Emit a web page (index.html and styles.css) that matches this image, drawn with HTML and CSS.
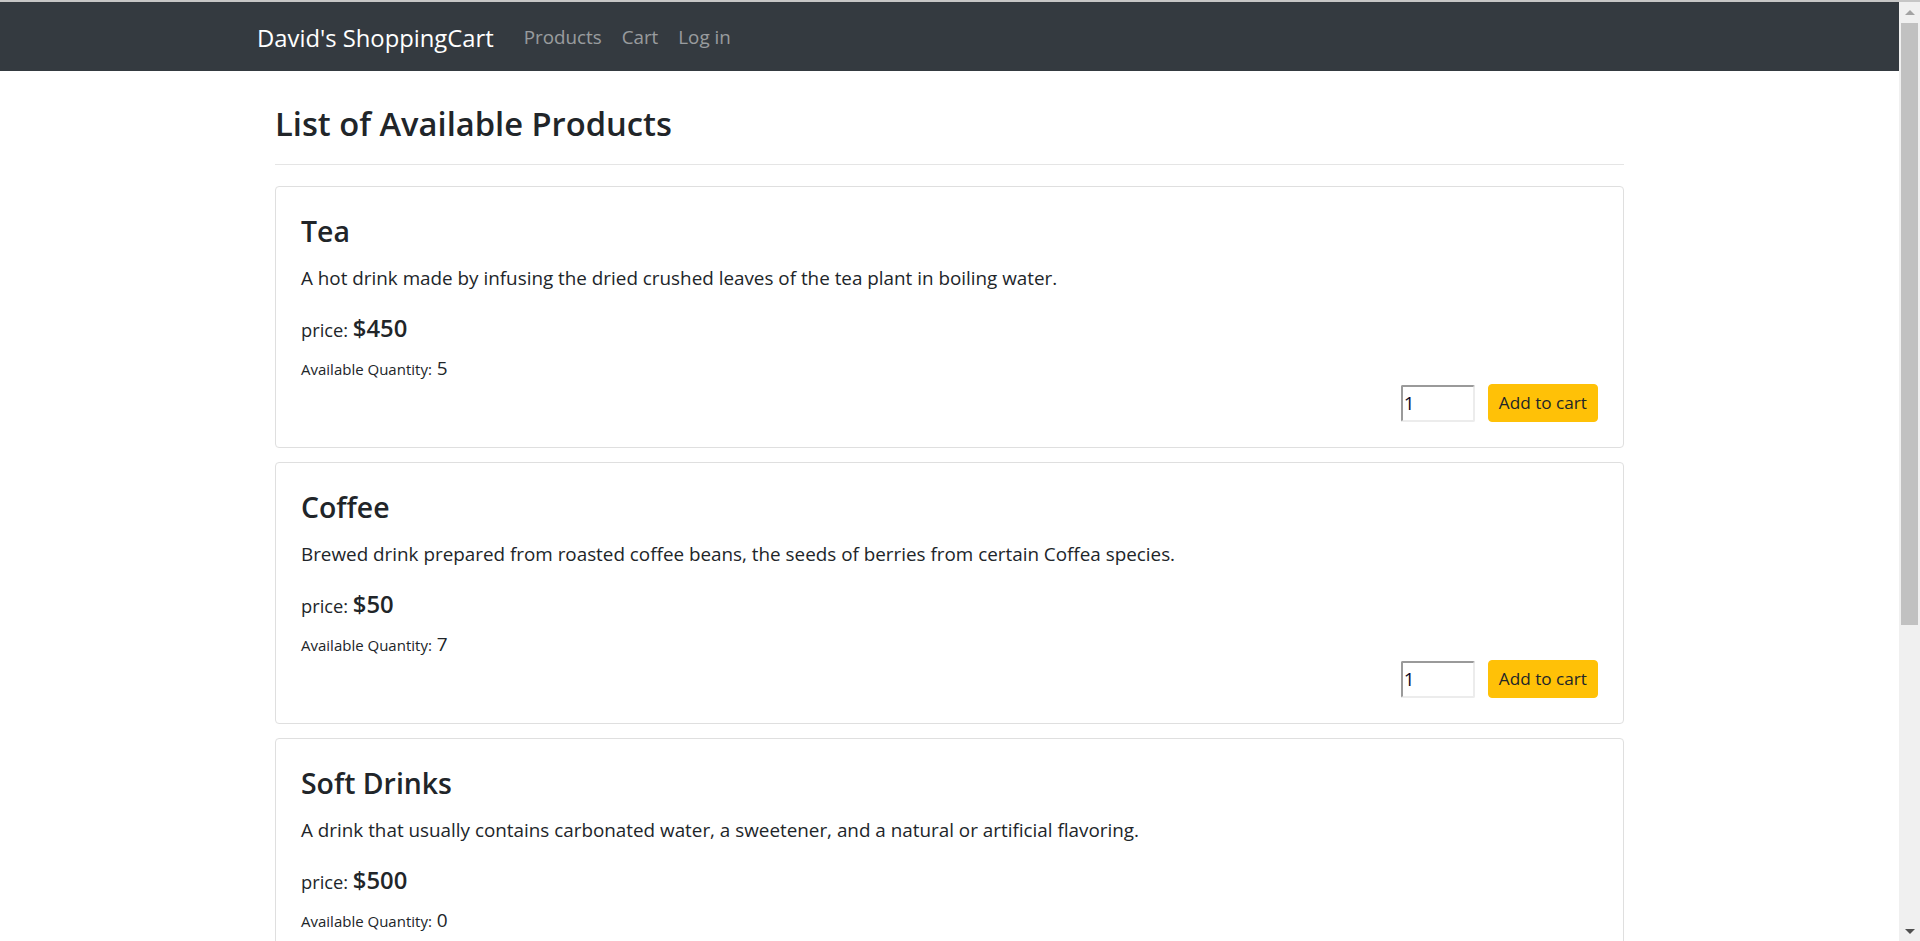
FILE: index.html
```html
<!DOCTYPE html>
<html lang="en">
<head>
<meta charset="utf-8">
<title>David's ShoppingCart</title>
<link rel="stylesheet" href="styles.css">
</head>
<body>
<div class="window">
  <div class="viewport">
    <nav class="navbar">
      <div class="nav-inner">
        <a class="brand" href="#">David's ShoppingCart</a>
        <ul class="nav-links">
          <li><a href="#">Products</a></li>
          <li><a href="#">Cart</a></li>
          <li><a href="#">Log in</a></li>
        </ul>
      </div>
    </nav>
    <main class="container">
      <h2 class="page-title">List of Available Products</h2>
      <hr class="divider">

      <div class="card">
        <h3 class="card-title">Tea</h3>
        <p class="card-text">A hot drink made by infusing the dried crushed leaves of the tea plant in boiling water.</p>
        <p class="price">price: <span class="amount">$450</span></p>
        <p class="qty"><span class="qty-label">Available Quantity:</span> 5</p>
        <div class="controls">
          <input class="qty-input" type="number" value="1">
          <button class="btn-add">Add to cart</button>
        </div>
      </div>

      <div class="card">
        <h3 class="card-title">Coffee</h3>
        <p class="card-text">Brewed drink prepared from roasted coffee beans, the seeds of berries from certain Coffea species.</p>
        <p class="price">price: <span class="amount">$50</span></p>
        <p class="qty"><span class="qty-label">Available Quantity:</span> 7</p>
        <div class="controls">
          <input class="qty-input" type="number" value="1">
          <button class="btn-add">Add to cart</button>
        </div>
      </div>

      <div class="card">
        <h3 class="card-title">Soft Drinks</h3>
        <p class="card-text">A drink that usually contains carbonated water, a sweetener, and a natural or artificial flavoring.</p>
        <p class="price">price: <span class="amount">$500</span></p>
        <p class="qty"><span class="qty-label">Available Quantity:</span> 0</p>
        <p class="out">Product is out of stock</p>
      </div>
    </main>
  </div>
  <div class="scrollbar">
    <div class="sb-arrow sb-up"></div>
    <div class="sb-track"><div class="sb-thumb"></div></div>
    <div class="sb-arrow sb-down"></div>
  </div>
</div>
</body>
</html>
```
FILE: styles.css
```css
html, body {
  margin: 0;
  padding: 0;
  height: 100%;
  overflow: hidden;
  background: #fff;
}

body {
  font-family: "Open Sans", "Noto Sans", sans-serif;
  color: #212529;
  font-size: 19px;
}

.window {
  display: flex;
  height: 100%;
  box-sizing: border-box;
  border-top: 2px solid #c6c6c6;
}

.viewport {
  flex: 1;
  min-width: 0;
  overflow: hidden;
}

/* Navbar */
.navbar {
  background: #343a40;
  height: 69px;
  display: flex;
  align-items: center;
}

.nav-inner {
  width: 1385px;
  margin: 0 auto;
  padding-top: 2px;
  display: flex;
  align-items: center;
}

.brand {
  color: #fff;
  text-decoration: none;
  font-size: 23.8px;
  line-height: 30px;
  margin-right: 20px;
}

.nav-links {
  list-style: none;
  display: flex;
  margin: 0;
  padding: 0;
}

.nav-links a {
  display: block;
  color: rgba(255, 255, 255, 0.5);
  text-decoration: none;
  font-size: 18.8px;
  line-height: 27px;
  padding: 0 10px;
}

/* Main */
.container {
  width: 1349px;
  margin: 0 auto;
}

.page-title {
  font-size: 32.7px;
  font-weight: 600;
  line-height: 43px;
  margin: 31px 0 0;
}

.divider {
  border: 0;
  border-top: 1px solid #e5e5e5;
  margin: 19px 0 21px;
}

.card {
  border: 1px solid #dfdfdf;
  border-radius: 4px;
  padding: 25px;
  margin-bottom: 14px;
}

.card-title {
  font-size: 28.4px;
  font-weight: 600;
  line-height: 38px;
  margin: 0 0 15px;
}

.card-text {
  font-size: 18.85px;
  line-height: 27px;
  margin: 0 0 20px;
}

.price {
  font-size: 18.3px;
  line-height: 36px;
  margin: 0 0 7px;
}

.amount {
  font-size: 23.8px;
  font-weight: 600;
  line-height: 25px;
}

.qty {
  font-size: 19px;
  line-height: 27px;
  margin: 0;
}

.qty-label {
  font-size: 15px;
}

.out {
  color: #dc3545;
  font-size: 19px;
  line-height: 27px;
  margin: 1px 0 0;
}

.controls {
  display: flex;
  justify-content: flex-end;
  align-items: center;
  gap: 13px;
  margin-top: 1px;
}

.qty-input {
  box-sizing: border-box;
  width: 74px;
  height: 37px;
  border-style: solid;
  border-width: 2px;
  border-color: #9a9a9a #ececec #ececec #9a9a9a;
  border-radius: 2px;
  padding: 0 1px;
  font-family: "Open Sans", "Noto Sans", sans-serif;
  font-size: 19px;
  color: #0a0a28;
  background: #fff;
  -moz-appearance: textfield;
  appearance: textfield;
}

.qty-input::-webkit-outer-spin-button,
.qty-input::-webkit-inner-spin-button {
  -webkit-appearance: none;
  margin: 0;
}

.btn-add {
  box-sizing: border-box;
  height: 38px;
  padding: 0 10px;
  background: #ffc107;
  border: 1px solid #ffc107;
  border-radius: 4px;
  color: #212529;
  font-family: "Open Sans", "Noto Sans", sans-serif;
  font-size: 17.2px;
  line-height: 36px;
}

/* Fake scrollbar */
.scrollbar {
  width: 21px;
  flex: none;
  background: #f0f0f0;
  display: flex;
  flex-direction: column;
}

.sb-arrow {
  height: 20px;
  flex: none;
  display: flex;
  justify-content: center;
  align-items: center;
}

.sb-up::before {
  content: "";
  border-left: 5px solid transparent;
  border-right: 5px solid transparent;
  border-bottom: 5px solid #a3a3a3;
}

.sb-down::before {
  content: "";
  border-left: 5px solid transparent;
  border-right: 5px solid transparent;
  border-top: 5px solid #505050;
}

.sb-track {
  flex: 1;
  padding: 1px 2px 0;
}

.sb-thumb {
  height: 602px;
  background: #c1c1c1;
}
```
